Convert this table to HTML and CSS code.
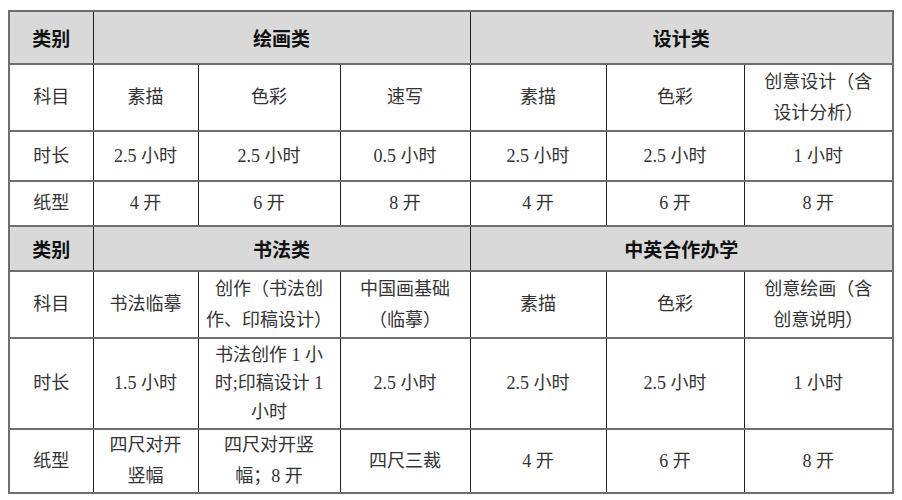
FILE: index.html
```html
<!DOCTYPE html>
<html lang="zh-CN">
<head>
<meta charset="utf-8">
<title>考试科目</title>
<link rel="stylesheet" href="styles.css">
</head>
<body>
<table class="exam">
  <colgroup>
    <col class="c1"><col class="c2"><col class="c3"><col class="c4"><col class="c5"><col class="c6"><col class="c7">
  </colgroup>
  <tr class="head r-h1">
    <th>类别</th>
    <th colspan="3">绘画类</th>
    <th colspan="3">设计类</th>
  </tr>
  <tr class="r-subj">
    <td>科目</td><td>素描</td><td>色彩</td><td>速写</td><td>素描</td><td>色彩</td><td>创意设计（含<br>设计分析）</td>
  </tr>
  <tr class="r-time1">
    <td>时长</td><td>2.5 小时</td><td>2.5 小时</td><td>0.5 小时</td><td>2.5 小时</td><td>2.5 小时</td><td>1 小时</td>
  </tr>
  <tr class="r-paper1">
    <td>纸型</td><td>4 开</td><td>6 开</td><td>8 开</td><td>4 开</td><td>6 开</td><td>8 开</td>
  </tr>
  <tr class="head r-h2">
    <th>类别</th>
    <th colspan="3">书法类</th>
    <th colspan="3">中英合作办学</th>
  </tr>
  <tr class="r-subj">
    <td>科目</td><td>书法临摹</td><td>创作（书法创<br>作、印稿设计）</td><td>中国画基础<br>（临摹）</td><td>素描</td><td>色彩</td><td>创意绘画（含<br>创意说明）</td>
  </tr>
  <tr class="r-time2">
    <td>时长</td><td>1.5 小时</td><td class="tight">书法创作 1 小<br>时;印稿设计 1<br>小时</td><td>2.5 小时</td><td>2.5 小时</td><td>2.5 小时</td><td>1 小时</td>
  </tr>
  <tr class="r-paper2">
    <td>纸型</td><td>四尺对开<br>竖幅</td><td>四尺对开竖<br>幅；8 开</td><td>四尺三裁</td><td>4 开</td><td>6 开</td><td>8 开</td>
  </tr>
</table>
</body>
</html>
```
FILE: styles.css
```css
html, body {
  margin: 0;
  padding: 0;
  background: #ffffff;
}
body {
  padding: 10px 0 0 8px;
}
.exam {
  border-collapse: collapse;
  table-layout: fixed;
  width: 885px;
  border: 2px solid #6e6e6e;
  font-family: "Liberation Serif", "Noto Sans CJK SC", serif;
  font-size: 18px;
  color: #333333;
}
.c1 { width: 84px; }
.c2 { width: 105px; }
.c3 { width: 142px; }
.c4 { width: 130px; }
.c5 { width: 136px; }
.c6 { width: 138px; }
.c7 { width: 149px; }

.exam td, .exam th {
  border-top: 2px solid #6e6e6e;
  border-bottom: 2px solid #6e6e6e;
  border-left: 1px solid #1e1e1e;
  border-right: 1px solid #1e1e1e;
  text-align: center;
  vertical-align: middle;
  padding: 0 6px;
  line-height: 31px;
}
.exam th {
  background: #d9d9d9;
  color: #111111;
  font-family: "Noto Sans CJK SC", sans-serif;
  font-weight: 700;
  font-size: 19px;
}
.r-h1 { height: 53px; }
.r-h2 { height: 45px; }
.r-subj { height: 67px; }
.r-time1 { height: 50px; }
.r-paper1 { height: 45px; }
.r-time2 { height: 91px; }
.r-paper2 { height: 61px; }
.exam td.tight { line-height: 28.5px; }
```
